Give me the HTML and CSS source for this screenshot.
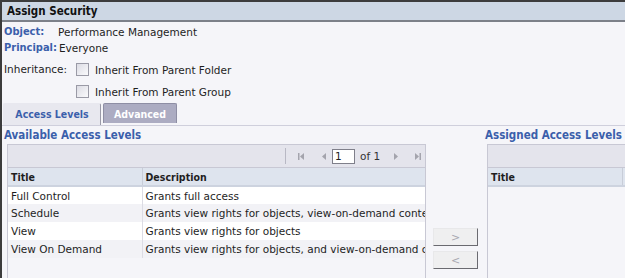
FILE: index.html
```html
<!DOCTYPE html>
<html lang="en">
<head>
  <meta charset="UTF-8">
  <title>Assign Security</title>
  <link rel="stylesheet" href="styles.css">
</head>
<body>
  <div class="window">
    <!-- Title bar -->
    <div class="title-bar">Assign Security</div>

    <!-- Object / principal / inheritance -->
    <div class="props">
      <div class="prop-row">
        <span class="prop-label">Object:</span>
        <span>Performance Management</span>
      </div>
      <div class="prop-row">
        <span class="prop-label">Principal:</span>
        <span>Everyone</span>
      </div>
      <div class="inherit">
        <span class="inherit-label">Inheritance:</span>
        <div class="inherit-options">
          <label class="check"><span class="box"></span>Inherit From Parent Folder</label>
          <label class="check"><span class="box"></span>Inherit From Parent Group</label>
        </div>
      </div>
    </div>

    <!-- Tabs -->
    <div class="tabs">
      <div class="tab active">Access Levels</div>
      <div class="tab">Advanced</div>
    </div>

    <!-- Lists -->
    <div class="lists">
      <section class="list available">
        <h2>Available Access Levels</h2>
        <div class="grid">
          <div class="toolbar">
            <div class="pager">
              <span class="sep"></span>
              <svg class="pg" width="8" height="9" viewBox="0 0 8 9"><rect x="1" y="1" width="1.5" height="7" fill="#a4a4ad"/><path d="M7 1 L3 4.5 L7 8 Z" fill="#a4a4ad"/></svg>
              <svg class="pg prev" width="8" height="9" viewBox="0 0 8 9"><path d="M6 1 L2 4.5 L6 8 Z" fill="#a4a4ad"/></svg>
              <span class="page-input">1</span>
              <span class="of">of 1</span>
              <svg class="pg next" width="8" height="9" viewBox="0 0 8 9"><path d="M2 1 L6 4.5 L2 8 Z" fill="#a4a4ad"/></svg>
              <svg class="pg last" width="8" height="9" viewBox="0 0 8 9"><path d="M1 1 L5 4.5 L1 8 Z" fill="#a4a4ad"/><rect x="5.5" y="1" width="1.5" height="7" fill="#a4a4ad"/></svg>
            </div>
          </div>
          <table class="rows">
            <thead>
              <tr><th class="c-title">Title</th><th>Description</th></tr>
            </thead>
            <tbody>
              <tr><td>Full Control</td><td>Grants full access</td></tr>
              <tr><td>Schedule</td><td>Grants view rights for objects, view-on-demand content</td></tr>
              <tr><td>View</td><td>Grants view rights for objects</td></tr>
              <tr><td>View On Demand</td><td>Grants view rights for objects, and view-on-demand content</td></tr>
            </tbody>
          </table>
        </div>
      </section>

      <div class="mover">
        <button class="move">&gt;</button>
        <button class="move">&lt;</button>
      </div>

      <section class="list assigned">
        <h2>Assigned Access Levels</h2>
        <div class="grid">
          <div class="toolbar"></div>
          <table class="rows">
            <thead>
              <tr><th class="c-title">Title</th><th></th></tr>
            </thead>
          </table>
        </div>
      </section>
    </div>
  </div>
</body>
</html>
```

FILE: styles.css
```css
/* Reset & General */
* {
  margin: 0;
  padding: 0;
  box-sizing: border-box;
}

body {
  font-family: 'DejaVu Sans', Verdana, sans-serif;
  font-size: 10.5px;
  color: #1e1e1e;
  background-color: #f5f5f9;
  overflow: hidden;
}

.window {
  width: 625px;
  height: 278px;
  display: flex;
  flex-direction: column;
  border-top: 2px solid #3c3c3c;
  border-left: 2px solid #3c3c3c;
  overflow: hidden;
}

/* Bold texts use the narrower cut */
.title-bar,
.prop-label,
.tab,
.list h2,
.rows th {
  font-family: 'DejaVu Sans Condensed', 'DejaVu Sans', sans-serif;
  font-weight: bold;
}

/* Title bar */
.title-bar {
  height: 20px;
  padding-left: 5px;
  line-height: 18px;
  font-size: 11.5px;
  color: #111;
  background-color: #cdd7e4;
  border-bottom: 2px solid #7c8089;
}

/* Properties */
.props {
  padding: 2px 0 0 2px;
}

.prop-row {
  display: flex;
  height: 16px;
  line-height: 16px;
}

.prop-label {
  min-width: 52px;
  margin-right: 2px;
  font-size: 11px;
  color: #3b5fab;
}

.inherit {
  display: flex;
  margin-top: 7px;
}

.inherit-label {
  width: 72px;
  line-height: 13px;
}

.inherit-options {
  display: flex;
  flex-direction: column;
  gap: 9px;
}

.check {
  display: flex;
  align-items: center;
  height: 13px;
}

.box {
  width: 13px;
  height: 13px;
  margin-right: 6px;
  border: 1px solid #9a9aa6;
  background: linear-gradient(135deg, #dcdce4, #fafafc);
}

/* Tabs */
.tabs {
  display: flex;
  gap: 2px;
  margin-top: 5px;
  padding-left: 1px;
  height: 23px;
  border-bottom: 1px solid #cfcfdc;
}

.tab {
  width: 74px;
  height: 20px;
  line-height: 20px;
  font-size: 10.5px;
  text-align: center;
  color: #fff;
  background-color: #acacc2;
  border: 1px solid #8e8ea4;
  border-bottom: none;
  border-radius: 2px 2px 0 0;
}

.tab.active {
  width: 98px;
  height: 22px;
  color: #3b5fab;
  background-color: #e8e8ef;
  border-color: #e8e8ef;
  border-right: 1px solid #9a9aa8;
  background-image: linear-gradient(to right, #9a9aa8 50%, transparent 50%);
  background-size: 6px 1px;
  background-repeat: repeat-x;
  background-position: 12px 21px;
}

/* Lists */
.lists {
  flex: 1;
  display: flex;
  padding-left: 2px;
}

.list h2 {
  height: 18px;
  line-height: 18px;
  font-size: 11.5px;
  color: #3b5fab;
  white-space: nowrap;
}

.available {
  width: 422px;
}

.available .grid {
  margin-left: 3px;
}

.assigned {
  flex: 1;
  min-width: 0;
}

.assigned .grid {
  margin-left: 2px;
  width: 160px;
}

.grid {
  height: 200px;
  border-left: 1px solid #c8c8d4;
  border-right: 1px solid #c8c8d4;
}

.toolbar {
  height: 24px;
  background-color: #e4e4ec;
  border-top: 1px solid #c8c8d4;
  border-bottom: 1px solid #c8c8d4;
}

.pager {
  display: flex;
  align-items: center;
  height: 22px;
  padding-left: 277px;
}

.sep {
  width: 1px;
  height: 16px;
  background-color: #b8b8c4;
  margin-right: 11px;
}

.pg.prev { margin-left: 15px; }
.pg.next { margin-left: 12px; }
.pg.last { margin-left: 14px; }

.page-input {
  width: 23px;
  height: 15px;
  margin-left: 4px;
  padding-left: 2px;
  line-height: 13px;
  background-color: #fff;
  border: 1px solid #7f7f8a;
}

.of {
  margin-left: 5px;
  color: #333;
}

.rows {
  width: 100%;
  border-collapse: collapse;
  table-layout: fixed;
}

.rows th {
  height: 18px;
  text-align: left;
  padding-left: 3px;
  font-size: 10.5px;
  background-color: #dee4ee;
  border-bottom: 2px solid #cdd3df;
}

.rows th.c-title {
  width: 134px;
  border-right: 1px solid #c8cdd8;
}

.rows td {
  height: 18px;
  padding-left: 3px;
  white-space: nowrap;
  overflow: hidden;
  background-color: #fff;
}

.rows td:first-child {
  border-right: 1px solid #dcdce4;
}

.rows tbody tr:nth-child(even) td {
  background-color: #f2f2f6;
}

/* Move buttons */
.mover {
  width: 59px;
  display: flex;
  flex-direction: column;
  align-items: center;
  gap: 5px;
  padding-top: 102px;
}

.move {
  width: 45px;
  height: 18px;
  font-family: inherit;
  font-size: 11px;
  color: #a8a8b0;
  background-color: #efeff0;
  border: 1px solid #e8e8ea;
  border-right-color: #6a6a70;
  border-bottom-color: #6a6a70;
}
```
